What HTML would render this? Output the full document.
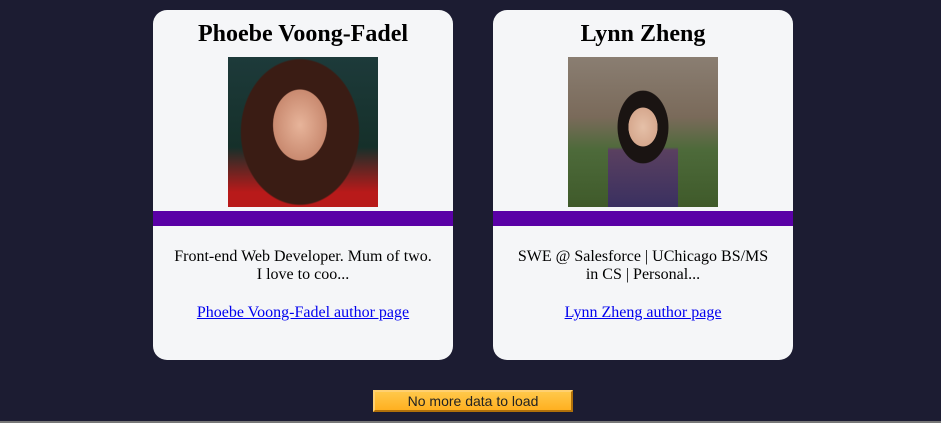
<!DOCTYPE html>
<html><head><style>
body{margin:0;width:941px;height:423px;background:#1c1c32;position:relative;overflow:hidden;font-family:"Liberation Serif",serif;}
.card{position:absolute;top:10px;width:300px;height:350px;background:#f5f6f8;border-radius:14px;overflow:hidden;text-align:center;}
.card h2{margin:0;position:absolute;top:10px;left:0;right:0;font-size:24px;font-weight:bold;color:#000;line-height:28px;}
.img{position:absolute;left:75px;top:47px;width:150px;height:150px;}
.bar{position:absolute;left:0;right:0;top:201px;height:15px;background:#5a00a6;}
.desc{position:absolute;top:238px;left:19px;right:19px;font-size:16px;line-height:18px;color:#000;}
.link{position:absolute;top:294px;left:0;right:0;font-size:16px;color:#0000ee;text-decoration:underline;}
.btn{position:absolute;left:373px;top:390px;width:196px;height:18px;background:linear-gradient(#ffc84a,#ffb020);border:2px solid;border-color:#ffd070 #b0700a #b0700a #ffd070;font-family:"Liberation Sans",sans-serif;font-size:14px;line-height:18px;text-align:center;color:#222;}
.line{position:absolute;left:0;right:0;top:421px;height:2px;background:#777;}
</style></head><body>
<div class="card" style="left:153px">
<h2>Phoebe Voong-Fadel</h2>
<div class="img" style="background:radial-gradient(ellipse 38px 50px at 72px 68px,#e7b49a 0,#c98a70 70%,transparent 72%),radial-gradient(ellipse 65px 80px at 72px 75px,#3a1c14 0,#3a1c14 90%,transparent 92%),linear-gradient(180deg,#1d3a3a,#15302a 60%,#b81a1a 90%)"></div>
<div class="bar"></div>
<div class="desc">Front-end Web Developer. Mum of two. I love to coo...</div>
<div class="link">Phoebe Voong-Fadel author page</div>
</div>
<div class="card" style="left:493px">
<h2>Lynn Zheng</h2>
<div class="img" style="background:radial-gradient(ellipse 18px 24px at 75px 70px,#e5c0a8 0,#d6a88e 80%,transparent 82%),radial-gradient(ellipse 28px 40px at 75px 70px,#1a1412 0,#1a1412 90%,transparent 92%),linear-gradient(180deg,transparent 60%,#5a4060 62%,#3a3060 100%) 40px 0/70px 150px no-repeat,linear-gradient(180deg,#8a7e72 0,#7a6a5a 40%,#4d6a3a 62%,#3f5a2a 100%)"></div>
<div class="bar"></div>
<div class="desc">SWE @ Salesforce | UChicago BS/MS in CS | Personal...</div>
<div class="link">Lynn Zheng author page</div>
</div>
<div class="btn">No more data to load</div>
<div class="line"></div>
</body></html>
